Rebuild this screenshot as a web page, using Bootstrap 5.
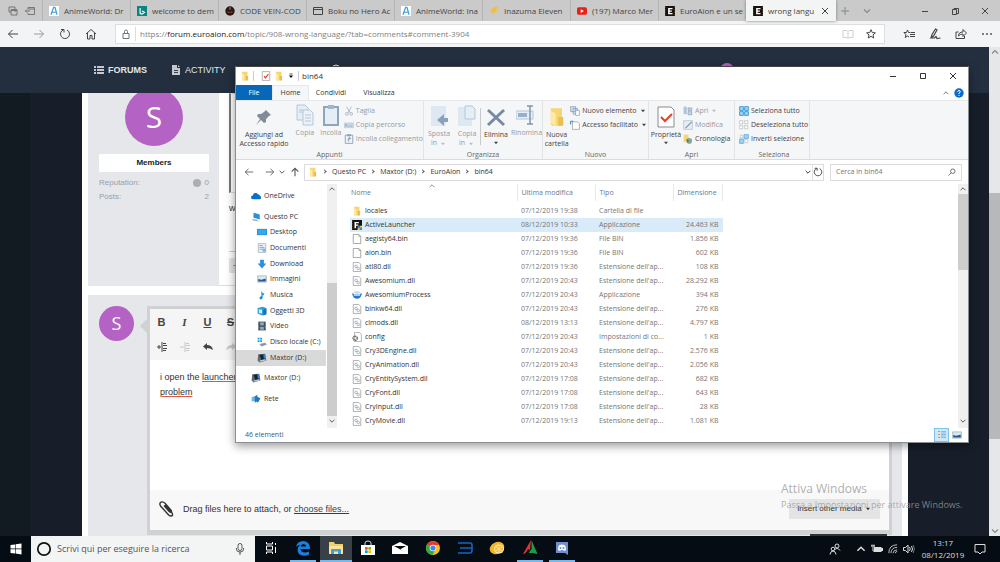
<!DOCTYPE html>
<html lang="it">
<head>
<meta charset="utf-8">
<meta name="viewport" content="width=device-width, initial-scale=1">
<title>wrong language - EuroAion</title>
<link rel="stylesheet" href="https://cdn.jsdelivr.net/npm/bootstrap@5.3.0/dist/css/bootstrap.min.css">
<style>
:root{--ui:"Open Sans","Noto Sans",sans-serif;--forum:"Liberation Sans",Arial,sans-serif}
body{height:100vh;font-family:var(--ui);font-size:8px;line-height:12px;color:#333;background:#171e29;overflow:hidden}
svg{display:block;flex:none}
button,input{font:inherit;color:inherit;background:none;border:0;padding:0;margin:0;line-height:inherit}
button{white-space:nowrap}
input:focus{outline:0}
h1,h2,p,ul,ol{margin:0}
ul,ol{padding:0;list-style:none}
.i8{width:8px;height:8px}.i10{width:10px;height:10px}.i12{width:12px;height:12px}.i16{width:16px;height:16px}
.ln{fill:none;stroke:currentColor}
/* browser */
.tabstrip{height:21px;background:#cacaca;color:#444}
.striptools{width:42px;color:#777}
.btab{width:88px;padding:0 2px 0 6px;gap:5px;border-left:1px solid #b4b4b4}
.btab .ttl{flex:1;overflow:hidden;white-space:nowrap;text-align:left}
.btab.current{background:#f3f4f4;border-color:#f3f4f4;width:90px;padding-right:6px;box-shadow:0 0 3px #777}
.wctl{width:30px;height:21px}
.addr{height:26px;background:#f2f4f5;color:#444}
.addr .tool{width:26px}
.urlbox{height:20px;background:#fff;border:1px solid #dcdedf;margin:0 11px}
.urlbox .lock{width:20px;border-right:1px solid #ddd;height:14px}
.urltext{color:#808080;font-size:8px}
.urltext b{font-weight:400;color:#222}
/* forum */
.site{background:linear-gradient(90deg,#131b22 30px,#171e29 30px);min-height:0}
.sitenav{height:46px;background:#232f3f;font-family:var(--forum);font-size:9px;color:#e4e6e9;padding-left:94px}
.sitenav a{color:inherit;text-decoration:none}
.sitenav .browse{margin-left:104px}
.sitenav .me{width:14px;height:14px;border-radius:50%;background:#b462c4;margin-right:130px}
.sitenav .me+svg{margin-right:117px}
.sitecol{margin:0 81px 0 82px;background:#fff;padding:0 6px;font-family:var(--forum);font-size:9px;line-height:14px;height:100%;overflow:hidden}
.panel-g{background:#e6e7ea}
.topic{height:193px}
.author{width:131px;padding:0 10px 0 11px}
.avatar{background:#b462c4;color:#fff;border-radius:50%;font-family:var(--ui)}
.avatar.big{width:58px;height:58px;margin-top:-5px;font-size:30px;line-height:58px}
.avatar.sm2{width:35px;height:35px;font-size:18px;line-height:35px}
.role{background:#fff;height:18px;line-height:18px;width:100%;margin:8px 0 4px;font-size:8px;color:#222;border-radius:1px}
.stats{color:#9a9ea5;font-size:8px}
.postbody{border-bottom:1px solid #ddd;padding:0 10px}
.quoted{border:1px solid #ddd;border-left:2px solid #777;height:100px}
.postbody hr{margin:36px 0 6px}
.reply{margin-top:9px;padding:11px 10px 0 11px;height:300px}
.editor{border:3px solid #cfd1d2;border-bottom-width:5px;margin-left:13px}
.notch{left:-10px;top:9px;border:8px solid transparent;border-left:0;border-right-color:#cfd1d2}
.edtools{height:51px;background:#f5f5f5;color:#444}
.edtools .rw{height:25px}
.edtools button{width:23px;height:25px;font-size:11px;font-weight:700}
.edtext{height:130px;background:#fff;padding:10px;font-size:9px;line-height:15px;color:#333}
.spell{text-decoration:underline 1px;text-decoration-color:#e05545;text-underline-offset:1px}
.attach{height:40px;background:#f8f8f8;padding:0 9px 2px;font-size:9px}
.attach a{color:#2e3f5c}
.media{background:#e4e4e4;color:#333;width:91px;height:20px;font-size:8px;border-radius:1px}
.more{background:#e4e4e4;width:24px;height:15px;border-radius:1px}
.submit{background:#333;width:77px;height:20px;margin:-1px 5px 0 auto}
.pscroll{width:11px;background:#e6e7e8;color:#888}
.pscroll .thumb{background:#b7b8b9;height:246px;margin-top:136px}
.watermark{right:41px;bottom:50px;color:#9a9a9acc;pointer-events:none;width:178px;white-space:nowrap}
.watermark .l1{font-size:12px;line-height:16px}
.watermark .l2{font-size:9px;line-height:15px}
/* file explorer */
.explorer{left:235px;right:31px;top:66px;background:#fff;border:1px solid #8b8f94;border-top-color:#444;box-shadow:0 3px 9px #0006;font-size:7px;line-height:10px}
.titlebar{height:18px;padding-left:4px;gap:3px}
.titlebar h2{font-size:8px;line-height:12px}
.titlebar .wctl{height:18px}
.rtabs{height:15px}
.rtabs button{width:44px;height:15px}
.rtabs .file{width:36px;background:#0767b8;color:#fff}
.rtabs .on{width:37px;background:#f5f6f7;border:1px solid #e6e7e8;border-bottom:0}
.ribbon{height:60px;background:#f5f6f7;border-top:1px solid #e6e7e8;border-bottom:1px solid #dadbdc}
.rgroup{border-right:1px solid #e2e3e4;padding:3px 0 0;color:#444}
.rgroup .gl{line-height:11px;text-align:center;color:#666}
.rtools{height:45px}
.bigb{line-height:9px;height:45px;text-align:center}
.bigb .pic{width:20px;height:22px;margin:0 auto 2px}
.bigb .i8{margin:0 auto}
.off{color:#959ba3}
.off svg{opacity:.6}
.smallb{display:flex;align-items:center;gap:2px;height:14px}
.g1{width:188px}.g2{width:119px}.g3{width:106px}.g4{width:86px}.g5{width:75px}
.w26{width:26px}.w56{width:56px}.w30{width:30px}.w34{width:34px}
.pathrow{height:24px;padding:0 6px 0 4px;color:#555}
.pathrow .nv{width:17px}
.crumbs{height:17px;border:1px solid #dcdcdc;padding-left:3px;color:#333}
.crumbs a{color:inherit;text-decoration:none}
.crumbs li+li::before{content:"";display:inline-block;width:3px;height:3px;border:solid #555;border-width:1px 1px 0 0;transform:rotate(45deg);margin:0 6px 1px 5px}
.find{width:132px;height:17px;border:1px solid #dcdcdc;margin-left:6px;padding:0 5px}
.find input{width:90px}
.find input::placeholder{color:#777;opacity:1}
.treepane{width:91px;padding-top:4px}
.tree{height:219px;gap:5px;color:#333}
.tree .node{display:flex;align-items:center;gap:3px;width:90px;padding-left:15px;flex:1;white-space:nowrap}
.tree .kids{flex:10;display:flex;flex-direction:column}
.tree .kids .sub{padding-left:21px}
.tree .chosen{background:#d9d9d9}
.vscroll{width:10px;background:#f0f0f0;color:#555;padding:1px 0 3px;gap:1px}
.vscroll .thumb{background:#cdcdcd}
.files{table-layout:fixed;width:373px;border-collapse:collapse;color:#767676;margin-left:13px}
.files th{font-weight:400;color:#5f7b96;height:17px;padding:0 0 0 4px;border-right:1px solid #e8e8e8}
.files th:first-child{padding-left:1px}
.files .sorted{top:-2px;left:78px;color:#888}
.files td{height:14px;padding:0 0 0 4px;line-height:14px;white-space:nowrap}
.files td:first-child{color:#333;padding-left:2px}
.files td:last-child{text-align:right;padding-right:4px}
.files .sp td{height:3px}
.files .sel td{background:#d9eaf8}
.files .fn{display:flex;align-items:center;gap:3px;height:14px}
.status{height:14px;padding:0 4px 0 9px;color:#3c5a78}
.vw{width:15px;height:14px}
.vw.on{background:#cde8fb;border:1px solid #7cc3ee}
/* taskbar */
.taskbar{height:26px;background:#060c13;color:#fff}
.startb{width:31px}
.search{width:224px;background:#f3f4f4;color:#555;padding:0 9px 0 5px}
.search input{font-size:9px;margin-left:5px}
.search input::placeholder{color:#555;opacity:1}
.apps{width:323px}
.apps button{flex:1;height:26px;border-bottom:2px solid transparent}
.apps .run{background:linear-gradient(#76b9ed,#76b9ed) center bottom/26px 2px no-repeat border-box}
.apps .front{background:#3a4047;border-color:#76b9ed}
.tray{color:#ddd}
.tray button{width:16px}
.tray .clock{width:52px;text-align:center;font-size:8px}
.tray .note{width:22px;margin-right:9px}
</style>
</head>
<body class="d-flex flex-column">
<svg width="0" height="0" class="position-absolute" aria-hidden="true">
<symbol id="folder" viewBox="0 0 16 16"><path d="M3 1h9v14H4l-1-1z" fill="#f6d673"/><path d="M3 3l4 2v10l-4-2z" fill="#ffe9a6"/><path d="M9 8h4v7H9z" fill="#eabf51"/></symbol>
<symbol id="page" viewBox="0 0 16 16"><path d="M2 .7h9l3 3v11.6H2z" fill="#fff" stroke="#8b8b8b" stroke-width="1.2"/><path d="M11 1v3h3" fill="none" stroke="#8b8b8b"/></symbol>
<symbol id="dll" viewBox="0 0 16 16"><path d="M2 .7h9l3 3v11.6H2z" fill="#fcfcfc" stroke="#9a9a9a" stroke-width="1.2"/><circle cx="6.500" cy="7" r="2" fill="none" stroke="#a3b1c0" stroke-width="1.500"/><circle cx="10" cy="10.500" r="2" fill="none" stroke="#a3b1c0" stroke-width="1.500"/></symbol>
<symbol id="ini" viewBox="0 0 16 16"><path d="M4 .7h8l3 3v11.6H4z" fill="#fff" stroke="#8b8b8b"/><circle cx="5" cy="10" r="3.300" fill="none" stroke="#666" stroke-width="2.400" stroke-dasharray="2 .8"/></symbol>
<symbol id="eaion" viewBox="0 0 16 16"><path fill="#17120f" d="M0 0h16v16H0z"/><path d="M1 1v14M15 1v14" stroke="#8a5a32" stroke-dasharray="2 2"/><path d="M5 3h7v2H7.500v2H11v2H7.500v2H12v2H5z" fill="#fff"/></symbol>
<symbol id="eshield" viewBox="0 0 16 16"><path fill="#17120f" d="M0 0h16v16H0z"/><path d="M1 1v14" stroke="#8a5a32" stroke-dasharray="2 2"/><path d="M4 3h7v2H6.500v2H10v2H6.500v4H4z" fill="#fff"/><path d="M9 9h3.500v3.500H9zM12.500 12.500H16V16h-3.500z" fill="#2f86dc"/><path d="M12.500 9H16v3.500h-3.500zM9 12.500h3.500V16H9z" fill="#f4cb3c"/></symbol>
<symbol id="awes" viewBox="0 0 16 16"><path d="M0 5q8 3 16 0-2 9-8 9T0 5z" fill="#2878c4"/><path d="M2 4q6-4 12 0l-6 2z" fill="#b9d8ee"/><path d="M3 8h10" stroke="#fff" stroke-width="2"/></symbol>
<symbol id="disk" viewBox="0 0 16 16"><path d="M2 2l11-1 2 11-11 3-3-3z" fill="#5b6772"/><path d="M4 3l8-1 1 7-6 2z" fill="#19222c"/><path d="M10 2h3l1 6-3 1z" fill="#3788cf"/><path d="M4 12l9-2 1 2-9 2z" fill="#c3ccd4"/></symbol>
<symbol id="aw" viewBox="0 0 16 16"><path fill="#fff" d="M0 0h16v16H0z"/><path d="M3 14L7.500 2h2L13 14M5 10h7" fill="none" stroke="#2b9be0" stroke-width="1.800"/></symbol>
<symbol id="cut" viewBox="0 0 16 16"><path d="M4 1l6 10M12 1L6 11" stroke="#7890ab" stroke-width="1.500" fill="none"/><circle cx="4.500" cy="12.500" r="2.200" fill="none" stroke="#7890ab" stroke-width="1.500"/><circle cx="11.500" cy="12.500" r="2.200" fill="none" stroke="#7890ab" stroke-width="1.500"/></symbol>
<symbol id="min" viewBox="0 0 10 10"><path d="M2 5.500h6" class="ln"/></symbol>
<symbol id="cls" viewBox="0 0 10 10"><path d="M2 2l6 6M8 2L2 8" class="ln"/></symbol>
<symbol id="up" viewBox="0 0 10 10"><path d="M2 6.500l3-3 3 3" class="ln" stroke-width="1.200"/></symbol>
<symbol id="dn" viewBox="0 0 10 10"><path d="M2 3.500l3 3 3-3" class="ln" stroke-width="1.200"/></symbol>
<symbol id="car" viewBox="0 0 10 10"><path d="M2.500 3.500h5l-2.500 3z" fill="currentColor"/></symbol>
<symbol id="back" viewBox="0 0 12 12"><path d="M11 6H1.500M5.500 2l-4 4 4 4" class="ln"/></symbol>
<symbol id="fwd" viewBox="0 0 12 12"><path d="M1 6h9.500M6.500 2l4 4-4 4" class="ln"/></symbol>
<symbol id="rel" viewBox="0 0 12 12"><path d="M4.500 1.800A4.500 4.500 0 1 0 8 2M2 1.500h3v3" class="ln"/></symbol>
<symbol id="thumbs" viewBox="0 0 16 16"><path d="M1 3h14v10H1z" fill="#dbe9f5" stroke="#8ba0b4"/><path d="M2 8l5 1 7-2v5H2z" fill="#245b90"/></symbol>
</svg>

<header>
<div class="tabstrip d-flex align-items-center">
 <div class="striptools d-flex align-items-center justify-content-around px-1">
  <button aria-label="Schede salvate"><svg class="i10 ln" viewBox="0 0 10 10"><path d="M1 1h6v5M1 1v5h2M3 3.500h6V9H3zM3 4.500h6"/></svg></button>
  <button aria-label="Metti da parte"><svg class="i10 ln" viewBox="0 0 10 10"><path d="M3 3V1.500h6.500v7H3V7M5 5H0M2 3.500L.5 5 2 6.500M3 3h6"/></svg></button>
 </div>
 <button class="btab d-flex align-items-center h-100"><svg class="i10"><use href="#aw"/></svg><span class="ttl">AnimeWorld: Dr</span></button>
 <button class="btab d-flex align-items-center h-100"><svg class="i10" viewBox="0 0 16 16"><path fill="#0c8484" d="M0 0h16v16H0z"/><path d="M5 3v9l3 1 4-3-4-2" fill="none" stroke="#fff" stroke-width="1.800"/></svg><span class="ttl">welcome to dem</span></button>
 <button class="btab d-flex align-items-center h-100"><svg class="i10" viewBox="0 0 16 16"><circle cx="8" cy="8" r="7.500" fill="#231815"/><path d="M3 9h4v2zM9 9h4l-4 2zM7 2h2v4H7z" fill="#e06030"/></svg><span class="ttl">CODE VEIN-COD</span></button>
 <button class="btab d-flex align-items-center h-100"><svg class="i10 ln" viewBox="0 0 10 10"><path d="M.5 1.500h9v7h-9zM.5 3.500h9"/></svg><span class="ttl">Boku no Hero Ac</span></button>
 <button class="btab d-flex align-items-center h-100"><svg class="i10"><use href="#aw"/></svg><span class="ttl">AnimeWorld: Ina</span></button>
 <button class="btab d-flex align-items-center h-100"><svg class="i10" viewBox="0 0 16 16"><path d="M8 1h7l-4 5h4L2 15l4-6H1z" fill="#f6bd3d"/></svg><span class="ttl">Inazuma Eleven</span></button>
 <button class="btab d-flex align-items-center h-100"><svg class="i10" viewBox="0 0 16 16"><rect y="2" width="16" height="12" rx="3" fill="#e62117"/><path d="M6 5l5 3-5 3z" fill="#fff"/></svg><span class="ttl">(197) Marco Mer</span></button>
 <button class="btab d-flex align-items-center h-100"><svg class="i10"><use href="#eaion"/></svg><span class="ttl">EuroAion e un se</span></button>
 <button class="btab current d-flex align-items-center h-100"><svg class="i10"><use href="#eaion"/></svg><span class="ttl">wrong langu</span><svg class="i10"><use href="#cls"/></svg></button>
 <button class="px-1 text-secondary opacity-75" aria-label="Nuova scheda"><svg class="i10 ln" viewBox="0 0 10 10"><path d="M5 1v8M1 5h8"/></svg></button>
 <button class="ms-2 text-secondary opacity-75" aria-label="Anteprima schede"><svg class="i10"><use href="#dn"/></svg></button>
 <div class="ms-auto d-flex">
  <button class="wctl d-flex align-items-center justify-content-center" aria-label="Riduci"><svg class="i10"><use href="#min"/></svg></button>
  <button class="wctl d-flex align-items-center justify-content-center" aria-label="Ripristina"><svg class="i10 ln" viewBox="0 0 10 10"><path d="M2.500 3.500h4v5h-4zM4 3.500v-1h4.500v5h-2"/></svg></button>
  <button class="wctl d-flex align-items-center justify-content-center" aria-label="Chiudi"><svg class="i10"><use href="#cls"/></svg></button>
 </div>
</div>
<div class="addr d-flex align-items-center">
 <button class="tool d-flex justify-content-center" aria-label="Indietro"><svg class="i12"><use href="#back"/></svg></button>
 <button class="tool d-flex justify-content-center opacity-50" aria-label="Avanti"><svg class="i12"><use href="#fwd"/></svg></button>
 <button class="tool d-flex justify-content-center" aria-label="Aggiorna"><svg class="i12"><use href="#rel"/></svg></button>
 <button class="tool d-flex justify-content-center" aria-label="Home"><svg class="i12 ln" viewBox="0 0 12 12"><path d="M1 6l5-4.500L11 6M2.500 5v6h2.500V7.500h2V11h2.500V5"/></svg></button>
 <div class="urlbox d-flex align-items-center flex-grow-1">
  <span class="lock d-flex align-items-center justify-content-center text-secondary"><svg class="i10 ln" viewBox="0 0 10 10"><path d="M2 4.500h6v5H2zM3.500 4.500V2.500a1.500 1.500 0 0 1 3 0v2"/></svg></span>
  <span class="urltext flex-grow-1 ps-1">https://<b>forum.euroaion.com</b>/topic/908-wrong-language/?tab=comments#comment-3904</span>
  <button class="me-1 opacity-25" aria-label="Visualizzazione di lettura"><svg class="i12 ln" viewBox="0 0 12 12"><path d="M1 2.500h4l1 1 1-1h4v7H7l-1 1-1-1H1zM6 3.500v7"/></svg></button>
  <button class="mx-2" aria-label="Aggiungi ai preferiti"><svg class="i10 ln" viewBox="0 0 12 12"><path stroke-width="1.200" d="M6 .8l1.500 3.500 3.800.3-2.900 2.500.9 3.700L6 8.800l-3.300 2 .9-3.700L.7 4.600l3.800-.3z"/></svg></button>
 </div>
 <button class="tool d-flex justify-content-center" aria-label="Preferiti"><svg class="i12 ln" viewBox="0 0 12 12"><path d="M7 4.500H5.500L4.500 2l-1 2.500H.8l2.200 2-.8 3 2.300-1.500 1.500 1M7.500 4.500H12M7 6.500h5M7 8.500h5"/></svg></button>
 <button class="tool d-flex justify-content-center" aria-label="Note Web"><svg class="i12 ln" viewBox="0 0 12 12"><path stroke-width="1.200" d="M2 10L3 6.500 6.500 1 8 2 4.500 8 2 10h3.500l1.500-1.500 1 2 3.500-.5"/></svg></button>
 <button class="tool d-flex justify-content-center" aria-label="Condividi"><svg class="i12 ln" viewBox="0 0 12 12"><path d="M3.500 4H1v6.500h8.500V8M3.500 8q0-4 4.500-4V1.500L11.500 5 8 8.500V6Q5 6 3.500 8z"/></svg></button>
 <button class="tool d-flex justify-content-center" aria-label="Altro"><svg class="i12" viewBox="0 0 12 12" fill="currentColor"><circle cx="2" cy="6" r=".9"/><circle cx="6" cy="6" r=".9"/><circle cx="10" cy="6" r=".9"/></svg></button>
</div>
</header>

<main class="site flex-grow-1 d-flex overflow-hidden">
 <div class="flex-grow-1 d-flex flex-column overflow-hidden">
  <nav class="sitenav d-flex align-items-center flex-shrink-0">
   <a href="#" class="d-flex align-items-center gap-1 fw-bold"><svg class="i10" viewBox="0 0 10 10" fill="#c3c8cf"><path d="M0 1h2v2H0zM3 1h7v2H3zM0 4h2v2H0zM3 4h7v2H3zM0 7h2v2H0zM3 7h7v2H3z"/></svg>FORUMS</a>
   <a href="#" class="d-flex align-items-center gap-1 ms-4"><svg class="i10" viewBox="0 0 10 10"><path d="M1 0h5v3h3v7H1z" fill="#c3c8cf"/><path d="M3 5h4v1H3zM3 7h4v1H3z" fill="#3c4756"/><path d="M7 0l2 2H7z" fill="#c3c8cf"/></svg>ACTIVITY</a>
   <a href="#" class="browse" aria-label="Browse"><svg class="i12 ln" viewBox="0 0 12 12"><circle cx="6" cy="5" r="4"/></svg></a>
   <span class="me ms-auto"></span><svg class="i8" viewBox="0 0 8 8"><path d="M4 0l4 4H0z" fill="#fff"/></svg>
  </nav>
  <div class="sitecol">
   <article class="topic d-flex">
    <aside class="author panel-g d-flex flex-column align-items-center">
     <div class="avatar big text-center">S</div>
     <div class="role text-center fw-bold">Members</div>
     <div class="stats w-100 d-flex justify-content-between"><span>Reputation:</span><span class="d-flex align-items-center gap-1"><svg class="i8" viewBox="0 0 8 8"><circle cx="4" cy="4" r="4" fill="#adaeb0"/></svg>0</span></div>
     <div class="stats w-100 d-flex justify-content-between"><span>Posts:</span><span>2</span></div>
    </aside>
    <div class="postbody flex-grow-1">
     <div class="quoted"></div>
     <p class="pt-2">wrong language</p>
     <hr><button class="more text-start ps-1">+</button>
    </div>
   </article>
   <section class="reply panel-g d-flex align-items-start">
    <div class="avatar sm2 text-center flex-shrink-0">S</div>
    <div class="flex-grow-1">
    <div class="editor position-relative">
     <span class="notch position-absolute"></span>
     <div class="edtools">
      <div class="rw d-flex"><button>B</button><button class="fst-italic" style="font-family:'Liberation Serif',serif">I</button><button class="text-decoration-underline">U</button><button class="text-decoration-line-through">S</button></div>
      <div class="rw d-flex align-items-center">
       <button aria-label="Aumenta rientro"><svg class="i10 ln mx-auto" viewBox="0 0 10 10"><path d="M0 5h4M2 3v4M5 0v10M6 1.500h3M6 3.500h4M6 6.500h4M6 8.500h3"/></svg></button>
       <button class="opacity-25" aria-label="Riduci rientro"><svg class="i10 ln mx-auto" viewBox="0 0 10 10"><path d="M0 5h4M5 0v10M6 1.500h3M6 3.500h4M6 6.500h4M6 8.500h3"/></svg></button>
       <button aria-label="Annulla"><svg class="i10 mx-auto" viewBox="0 0 10 10"><path d="M0 4.500L4 1v2q5 0 6 5-3-2-6-2v2z" fill="currentColor"/></svg></button>
       <button class="opacity-25" aria-label="Ripeti"><svg class="i10 mx-auto" viewBox="0 0 10 10"><path d="M10 4.500L6 1v2Q1 3 0 8q3-2 6-2v2z" fill="currentColor"/></svg></button>
      </div>
     </div>
     <div class="edtext" contenteditable="true" role="textbox" aria-label="Risposta">i open the <span class="spell">launcher</span><br><span class="spell">problem</span></div>
     <div class="attach d-flex align-items-center">
      <svg class="i16" viewBox="0 0 16 16" fill="none" stroke="#333" stroke-width="1.400"><path d="M6 4l7 8q1.500 2.500-.8 3-1.500.3-3-1.500L1.500 5Q0 2.500 2 1.200q2-1 4 1l6 7q1 1.500 0 2-1 .4-2-.8L5 4.500"/></svg>
      <span class="ms-2">Drag files here to attach, or <a href="#">choose files...</a></span>
      <button class="media ms-auto">Insert other media <svg class="i8 d-inline" viewBox="0 0 10 10"><use href="#car"/></svg></button>
     </div>
    </div>
    <div class="submit position-relative"></div>
    </div>
   </section>
  </div>
 </div>
 <div class="pscroll d-flex flex-column align-items-center"><svg class="i10"><use href="#up"/></svg><div class="thumb w-100"></div><svg class="i10 mt-auto"><use href="#dn"/></svg></div>
</main>

<section class="explorer position-absolute" aria-label="bin64">
 <div class="titlebar d-flex align-items-center">
  <svg class="i10"><use href="#folder"/></svg><span class="vr my-1"></span>
  <svg class="i10 ms-1" viewBox="0 0 16 16"><path d="M2 1h12v14H2z" fill="#fff" stroke="#888"/><path d="M5 8l2 3 5-6" fill="none" stroke="#d8452b" stroke-width="2"/></svg>
  <svg class="i10"><use href="#folder"/></svg><svg class="i8" viewBox="0 0 10 10"><path d="M3 2.500h4" class="ln"/><path d="M2.500 4.500h5l-2.500 3z"/></svg><span class="vr my-1"></span>
  <h2>bin64</h2>
  <div class="ms-auto d-flex">
   <button class="wctl d-flex align-items-center justify-content-center" aria-label="Riduci"><svg class="i10"><use href="#min"/></svg></button>
   <button class="wctl d-flex align-items-center justify-content-center" aria-label="Ingrandisci"><svg class="i10 ln" viewBox="0 0 10 10"><path d="M2.500 2.500h5v5h-5z"/></svg></button>
   <button class="wctl d-flex align-items-center justify-content-center" aria-label="Chiudi"><svg class="i10"><use href="#cls"/></svg></button>
  </div>
 </div>
 <div class="rtabs d-flex align-items-center">
  <button class="file">File</button><button class="on">Home</button><button>Condividi</button><button class="ms-1">Visualizza</button>
  <button class="ms-auto w-auto text-secondary" aria-label="Riduci barra"><svg class="i8"><use href="#up"/></svg></button>
  <button class="w-auto mx-1" aria-label="Guida"><svg class="i10" viewBox="0 0 10 10"><circle cx="5" cy="5" r="4.700" fill="#0a6cce"/><path d="M3.700 3.800q0-1.300 1.300-1.300t1.300 1.200Q6.300 4.500 5 5v1M5 7v1" fill="none" stroke="#fff"/></svg></button>
 </div>
 <div class="ribbon d-flex">
  <div class="rgroup g1"><div class="rtools d-flex">
   <button class="bigb w56"><svg class="pic" viewBox="0 0 20 22"><path d="M12 4l5 5-2 1-3 3v3l-2 1-3-3-5 5 4-6-3-3 1-2h3l3-2z" fill="#828c98"/></svg>Aggiungi ad<br>Accesso rapido</button>
   <button class="bigb w26 off d-flex flex-column"><svg class="pic" viewBox="0 0 20 22"><path d="M2 1h8l3 3v12H2z" fill="#dce8f4" stroke="#8aa8c8"/><path d="M8 6h7l3 3v12H8z" fill="#e8f0f8" stroke="#8aa8c8"/><path d="M4 6h4M4 8h4M10 11h6M10 14h6M10 17h6" stroke="#8aa8c8"/></svg><span class="w-100">Copia</span></button>
   <button class="bigb w26 off d-flex flex-column"><svg class="pic" viewBox="0 0 20 22"><path d="M3 3h14v18H3z" fill="#dce8f4" stroke="#4d7199" stroke-width="2"/><path d="M7 1h6v4H7z" fill="#6d8aa8"/></svg><span class="w-100">Incolla</span></button>
   <div><button class="smallb off"><svg class="i10"><use href="#cut"/></svg>Taglia</button><button class="smallb off"><svg class="i10" viewBox="0 0 16 16"><path d="M0 4h16v9H0z" fill="#a8c0da"/><path d="M2 7l1 3 1-3M6 10h2M10 10h3" stroke="#35587e" fill="none"/></svg>Copia percorso</button><button class="smallb off"><svg class="i10" viewBox="0 0 16 16"><path d="M2 2h12v13H2z" fill="#e8f0f8" stroke="#4d7199" stroke-width="1.500"/><path d="M6 0h4v3H6zM7 12V7h3M8.500 5l2 2-2 2" fill="none" stroke="#35587e" stroke-width="1.500"/></svg>Incolla collegamento</button></div>
  </div><div class="gl">Appunti</div></div>
  <div class="rgroup g2"><div class="rtools d-flex">
   <button class="bigb w30 off"><svg class="pic" viewBox="0 0 20 22"><path d="M2 1h15v20H2z" fill="#cfe0f0"/><path d="M19 13h-4v-4l-7 6 7 6v-4h4z" fill="#456a92"/></svg>Sposta<br>in <svg class="i8 d-inline"><use href="#car"/></svg></button>
   <button class="bigb w26 off"><svg class="pic" viewBox="0 0 20 22"><path d="M1 2h14v19H1z" fill="#cfe0f0"/><path d="M8 1h7l3 3v10H8z" fill="#dce8f4" stroke="#8aa8c8"/></svg>Copia<br>in <svg class="i8 d-inline"><use href="#car"/></svg></button>
   <span class="vr my-1 opacity-10"></span>
   <button class="bigb w30"><svg class="pic" viewBox="0 0 20 22"><path d="M2 4l16 15M18 4L2 19" stroke="#768aa5" stroke-width="3"/></svg>Elimina<svg class="i8"><use href="#car"/></svg></button>
   <button class="bigb w30 off d-flex flex-column"><svg class="pic" viewBox="0 0 20 22"><path d="M0 7h17v8H0z" fill="#dce8f4" stroke="#8aa8c8"/><path d="M2 9h9v4H2z" fill="#5c83ae"/><path d="M11 2h6M14 2v18M11 20h6" stroke="#35587e" stroke-width="1.500"/></svg><span class="w-100">Rinomina</span></button>
  </div><div class="gl">Organizza</div></div>
  <div class="rgroup g3"><div class="rtools d-flex">
   <button class="bigb w30"><svg class="pic" viewBox="0 0 16 16"><use href="#folder"/></svg>Nuova<br>cartella</button>
   <div><button class="smallb"><svg class="i10" viewBox="0 0 16 16"><path d="M1 1h8v8H1zM5 4h7v9H5z" fill="#cfe0f0" stroke="#7890ab"/><path d="M9 7h6v8H9z" fill="#fff" stroke="#7890ab"/></svg>Nuovo elemento<svg class="i8"><use href="#car"/></svg></button><button class="smallb"><svg class="i10" viewBox="0 0 16 16"><path d="M4 3h8l3 3v9H4z" fill="#fff" stroke="#888"/><path d="M1 7V2h4" fill="none" stroke="#2878c4" stroke-width="1.500"/></svg>Accesso facilitato<svg class="i8"><use href="#car"/></svg></button></div>
  </div><div class="gl">Nuovo</div></div>
  <div class="rgroup g4"><div class="rtools d-flex">
   <button class="bigb w34"><svg class="pic" viewBox="0 0 20 22"><path d="M2 1h13l3 3v17H2z" fill="#fff" stroke="#8b8b8b"/><path d="M5 11l4 4 7-7" fill="none" stroke="#e0402a" stroke-width="2"/></svg>Proprietà<svg class="i8"><use href="#car"/></svg></button>
   <div><button class="smallb off"><svg class="i10" viewBox="0 0 16 16"><path d="M1 1h5v12H1z" fill="#7aa5d0"/><path d="M8 3h6v4H8zM8 9h6v5H8z" fill="#a8c0da" stroke="#35587e"/></svg>Apri<svg class="i8"><use href="#car"/></svg></button><button class="smallb off"><svg class="i10" viewBox="0 0 16 16"><path d="M1 1h14v14H1z" fill="#dce8f4" stroke="#6d95bf"/><path d="M4 13L14 3" stroke="#35587e" stroke-width="2"/></svg>Modifica</button><button class="smallb"><svg class="i10" viewBox="0 0 16 16"><path d="M1 1h8v12H1z" fill="#f6d673"/><circle cx="10" cy="11" r="4.500" fill="#8fa39a"/><path d="M5 8l3 6 1-4z" fill="#1d8a35"/></svg>Cronologia</button></div>
  </div><div class="gl">Apri</div></div>
  <div class="rgroup g5 ps-1"><div class="rtools">
   <button class="smallb"><svg class="i10" viewBox="0 0 16 16"><path d="M1 1h6v6H1zM9 1h6v6H9zM1 9h6v6H1zM9 9h6v6H9z" fill="#9fd4f5" stroke="#3a9bdc" stroke-width="1.500"/></svg>Seleziona tutto</button><button class="smallb"><svg class="i10" viewBox="0 0 16 16"><path d="M1 1h5v5H1zM9 1h5v5H9zM1 9h5v5H1zM9 9h5v5H9z" fill="#fff" stroke="#b0b4b8"/></svg>Deseleziona tutto</button><button class="smallb"><svg class="i10" viewBox="0 0 16 16"><path d="M2 2h4v4H2zM9 9h5v5H9z" fill="#fff" stroke="#b0b4b8"/><path d="M8 1h7v6H8zM1 8h6v7H1z" fill="#9fd4f5" stroke="#3a9bdc"/></svg>Inverti selezione</button>
  </div><div class="gl">Seleziona</div></div>
 </div>
 <div class="pathrow d-flex align-items-center">
  <button class="nv d-flex justify-content-center" aria-label="Indietro"><svg class="i10" viewBox="0 0 12 12"><use href="#back"/></svg></button><button class="nv d-flex justify-content-center ms-1" aria-label="Avanti"><svg class="i10" viewBox="0 0 12 12"><use href="#fwd"/></svg></button><button aria-label="Recenti"><svg class="i8"><use href="#dn"/></svg></button><button class="mx-1" aria-label="Su"><svg class="i10 ln" viewBox="0 0 12 12"><path stroke-width="1.300" d="M6 11V1.500M2 5.500l4-4 4 4"/></svg></button>
  <div class="crumbs flex-grow-1 d-flex align-items-center"><svg class="i10"><use href="#folder"/></svg>
   <ol class="d-flex flex-grow-1 align-items-center"><li></li><li><a href="#">Questo PC</a></li><li><a href="#">Maxtor (D:)</a></li><li><a href="#">EuroAion</a></li><li><a href="#">bin64</a></li></ol>
   <button aria-label="Cronologia percorsi"><svg class="i8"><use href="#dn"/></svg></button><button class="h-100 border-start" aria-label="Aggiorna"><svg class="i10" viewBox="0 0 12 12"><use href="#rel"/></svg></button></div>
  <div class="find d-flex align-items-center justify-content-between"><input type="search" placeholder="Cerca in bin64" aria-label="Cerca in bin64"><svg class="i8 ln" viewBox="0 0 10 10"><circle cx="6" cy="4" r="2.800"/><path d="M4 6L.5 9.500"/></svg></div>
 </div>
 <div class="d-flex">
  <nav class="treepane">
   <ul class="tree d-flex flex-column">
    <li class="node"><svg class="i10" viewBox="0 0 16 16"><path d="M3 13a3 3 0 0 1 0-6 4.500 4.500 0 0 1 8-2q3 0 3.500 3a2.600 2.600 0 0 1-.5 5z" fill="#0a6fc9"/></svg>OneDrive</li>
    <li class="kids">
     <div class="node"><svg class="i10" viewBox="0 0 16 16"><path d="M4 1l10 3v8L4 9z" fill="#2a8fdd"/><path d="M1 11l8 1 4 3-9-1z" fill="#9fb0bf"/></svg>Questo PC</div>
     <div class="node sub"><svg class="i10" viewBox="0 0 16 16"><path d="M0 3h16v10H0z" fill="#1e88dc"/><path d="M1 4h14v8H1z" fill="#3aa7f0"/></svg>Desktop</div>
     <div class="node sub"><svg class="i10" viewBox="0 0 16 16"><path d="M2 1h12v14H2z" fill="#edf2f7" stroke="#8ba0b4"/><path d="M4 4h5M4 7h8M4 10h8" stroke="#5b7da0"/><path d="M9 9h5v5H9z" fill="#7ab8e8"/></svg>Documenti</div>
     <div class="node sub"><svg class="i10" viewBox="0 0 16 16"><path d="M5 1h6v6h4l-7 8-7-8h4z" fill="#2a8fdd"/></svg>Download</div>
     <div class="node sub"><svg class="i10"><use href="#thumbs"/></svg>Immagini</div>
     <div class="node sub"><svg class="i10" viewBox="0 0 16 16"><path d="M7 1q1 4 5 5-1 1-1 3-1-2-2-2v5q0 3-3 3-2-1-2-2 0-3 3-3z" fill="#1e88dc"/></svg>Musica</div>
     <div class="node sub"><svg class="i10" viewBox="0 0 16 16"><path d="M1 3l8-2 6 2v10l-7 2-7-3z" fill="#2aa0dd"/><path d="M3 5l5 1v6l-5-1z" fill="#cdeefb"/><path d="M10 6l5-2v9l-5 2z" fill="#1673b8"/></svg>Oggetti 3D</div>
     <div class="node sub"><svg class="i10" viewBox="0 0 16 16"><path d="M2 1h12v14H2z" fill="#39434e"/><path d="M5 2h6v5H5zM5 9h6v5H5z" fill="#8da7c0"/><path d="M3 2v12M13 2v12" stroke="#ddd" stroke-dasharray="1 1"/></svg>Video</div>
     <div class="node sub"><svg class="i10" viewBox="0 0 16 16"><path d="M1 1h3v3H1zM5 1h3v3H5zM1 5h3v3H1zM5 5h3v3H5z" fill="#1e9be8"/><path d="M4 11l9-2 3 3-9 3z" fill="#8b97a3"/></svg>Disco locale (C:)</div>
     <div class="node sub chosen"><svg class="i10"><use href="#disk"/></svg>Maxtor (D:)</div>
    </li>
    <li class="node"><svg class="i10"><use href="#disk"/></svg>Maxtor (D:)</li>
    <li class="node"><svg class="i10" viewBox="0 0 16 16"><path d="M1 5l6-2v8l-6 1z" fill="#6fb6e8"/><path d="M6 4l4-3v3l5 3-4 7-2-2-3 2z" fill="#2277bd"/></svg>Rete</li>
   </ul>
  </nav>
  <div class="vscroll d-flex flex-column align-items-center"><svg class="i8"><use href="#up"/></svg><div class="thumb w-100 mt-auto" style="height:133px"></div><svg class="i8"><use href="#dn"/></svg></div>
  <div class="flex-grow-1">
   <table class="files">
    <colgroup><col style="width:167px"><col style="width:78px"><col style="width:78px"><col></colgroup>
    <thead><tr><th class="position-relative">Nome<svg class="sorted i8 position-absolute"><use href="#up"/></svg></th><th>Ultima modifica</th><th>Tipo</th><th>Dimensione</th></tr></thead>
    <tbody>
    <tr class="sp"><td colspan="4"></td></tr>
    <tr><td><span class="fn"><svg class="i10"><use href="#folder"/></svg>locales</span></td><td>07/12/2019 19:38</td><td>Cartella di file</td><td></td></tr>
    <tr class="sel"><td><span class="fn"><svg class="i10"><use href="#eshield"/></svg>ActiveLauncher</span></td><td>08/12/2019 10:33</td><td>Applicazione</td><td>24.463 KB</td></tr>
    <tr><td><span class="fn"><svg class="i10"><use href="#page"/></svg>aegisty64.bin</span></td><td>07/12/2019 19:36</td><td>File BIN</td><td>1.856 KB</td></tr>
    <tr><td><span class="fn"><svg class="i10"><use href="#page"/></svg>aion.bin</span></td><td>07/12/2019 19:36</td><td>File BIN</td><td>602 KB</td></tr>
    <tr><td><span class="fn"><svg class="i10"><use href="#dll"/></svg>atl80.dll</span></td><td>07/12/2019 19:36</td><td>Estensione dell'ap...</td><td>108 KB</td></tr>
    <tr><td><span class="fn"><svg class="i10"><use href="#dll"/></svg>Awesomium.dll</span></td><td>07/12/2019 20:43</td><td>Estensione dell'ap...</td><td>28.292 KB</td></tr>
    <tr><td><span class="fn"><svg class="i10"><use href="#awes"/></svg>AwesomiumProcess</span></td><td>07/12/2019 20:43</td><td>Applicazione</td><td>394 KB</td></tr>
    <tr><td><span class="fn"><svg class="i10"><use href="#dll"/></svg>binkw64.dll</span></td><td>07/12/2019 20:43</td><td>Estensione dell'ap...</td><td>276 KB</td></tr>
    <tr><td><span class="fn"><svg class="i10"><use href="#dll"/></svg>clmods.dll</span></td><td>08/12/2019 13:13</td><td>Estensione dell'ap...</td><td>4.797 KB</td></tr>
    <tr><td><span class="fn"><svg class="i10"><use href="#ini"/></svg>config</span></td><td>07/12/2019 20:43</td><td>Impostazioni di co...</td><td>1 KB</td></tr>
    <tr><td><span class="fn"><svg class="i10"><use href="#dll"/></svg>Cry3DEngine.dll</span></td><td>07/12/2019 20:43</td><td>Estensione dell'ap...</td><td>2.576 KB</td></tr>
    <tr><td><span class="fn"><svg class="i10"><use href="#dll"/></svg>CryAnimation.dll</span></td><td>07/12/2019 20:43</td><td>Estensione dell'ap...</td><td>2.056 KB</td></tr>
    <tr><td><span class="fn"><svg class="i10"><use href="#dll"/></svg>CryEntitySystem.dll</span></td><td>07/12/2019 17:08</td><td>Estensione dell'ap...</td><td>682 KB</td></tr>
    <tr><td><span class="fn"><svg class="i10"><use href="#dll"/></svg>CryFont.dll</span></td><td>07/12/2019 17:08</td><td>Estensione dell'ap...</td><td>643 KB</td></tr>
    <tr><td><span class="fn"><svg class="i10"><use href="#dll"/></svg>CryInput.dll</span></td><td>07/12/2019 17:08</td><td>Estensione dell'ap...</td><td>28 KB</td></tr>
    <tr><td><span class="fn"><svg class="i10"><use href="#dll"/></svg>CryMovie.dll</span></td><td>07/12/2019 19:13</td><td>Estensione dell'ap...</td><td>1.081 KB</td></tr>
    </tbody>
   </table>
  </div>
  <div class="vscroll d-flex flex-column align-items-center"><svg class="i8"><use href="#up"/></svg><div class="thumb w-100" style="height:76px"></div><svg class="i8 mt-auto"><use href="#dn"/></svg></div>
 </div>
 <div class="status d-flex align-items-center"><span class="me-auto">46 elementi</span>
  <button class="vw on d-flex align-items-center justify-content-center" aria-label="Dettagli"><svg class="i10" viewBox="0 0 10 10"><path d="M1 1.500h2M1 4.500h2M1 7.500h2" stroke="#c99a4a"/><path d="M4 1.500h5M4 4.500h5M4 7.500h5M4 3h5M4 6h5" stroke="#6f98b8" stroke-width=".6"/></svg></button>
  <button class="vw d-flex align-items-center justify-content-center" aria-label="Anteprime"><svg class="i10"><use href="#thumbs"/></svg></button>
 </div>
</section>

<div class="watermark position-absolute"><div class="l1">Attiva Windows</div><div class="l2">Passa a Impostazioni per attivare Windows.</div></div>

<footer class="taskbar d-flex flex-shrink-0">
 <button class="startb d-flex align-items-center justify-content-center" aria-label="Start"><svg class="i12" viewBox="0 0 12 12" fill="#fff"><path d="M.5 2L5 1.400v4.200H.5zM5.600 1.300L11.500.5v5.100H5.600zM.5 6.200H5v4.300L.5 9.900zM5.600 6.200h5.900v5.200l-5.900-.8z"/></svg></button>
 <div class="search d-flex align-items-center"><svg class="i16" viewBox="0 0 16 16"><circle cx="8" cy="8" r="6.200" fill="none" stroke="#111" stroke-width="1.700"/></svg><input class="flex-grow-1" type="text" placeholder="Scrivi qui per eseguire la ricerca" aria-label="Cerca"><svg class="i12 ln" viewBox="0 0 12 12"><rect x="4" y=".5" width="4" height="7" rx="2"/><path d="M2.500 5v1.500Q2.500 9 6 9t3.500-2.500V5M6 9v3"/></svg></div>
 <div class="apps d-flex">
  <button aria-label="Visualizzazione attività"><svg class="i12 ln mx-auto" viewBox="0 0 12 12"><path d="M1.500 0v2h6V0M1.500 4h6v4h-6zM1.500 12v-2h6v2M10.500 1v2M10.500 5v6"/></svg></button>
  <button class="run" aria-label="Edge"><svg class="i16 mx-auto" viewBox="0 0 16 16"><path d="M1 7Q2 1 8.500 1 15 1.500 15 9H5.500q.5 3.500 4.500 3.500 2 0 4-1V14.500q-2 1.200-5 1.200-6.500-.5-6.500-6 0-3 3-5Q2.500 5 1 7zM5.700 6.500h5.500Q11 4 8.500 4T5.700 6.500z" fill="#1b7fe0"/></svg></button>
  <button class="front" aria-label="Esplora file"><svg class="i16 mx-auto" viewBox="0 0 16 16"><path d="M1 2h5l1 2h8v10H1z" fill="#f3cf6a"/><path d="M1 6h14v8H1z" fill="#ffe394"/><path d="M3 14V9h10v5h-3v-2.500H6V14z" fill="#3fa1df"/></svg></button>
  <button aria-label="Store"><svg class="i16 mx-auto" viewBox="0 0 16 16"><path d="M1 5h14v10H1z" fill="#fff"/><path d="M5 5V3q0-2 3-2t3 2v2" fill="none" stroke="#ddd"/><path d="M5 7h2.700v2.700H5z" fill="#f25022"/><path d="M8.300 7H11v2.700H8.300z" fill="#7fba00"/><path d="M5 10.300h2.700V13H5z" fill="#00a4ef"/><path d="M8.300 10.300H11V13H8.300z" fill="#ffb900"/></svg></button>
  <button aria-label="Posta"><svg class="i16 mx-auto" viewBox="0 0 16 16"><path d="M0 6l8-4 8 4v8H0z" fill="#fff"/><path d="M2 6h12L8 9.500l5 2.500" fill="#060c13"/></svg></button>
  <button aria-label="Chrome"><svg class="i16 mx-auto" viewBox="0 0 16 16"><circle cx="8" cy="8" r="7" fill="#fbbf12"/><path d="M8 8L2 4.500A7 7 0 0 1 14.200 5H8z" fill="#e33b2e"/><path d="M2 4.500A7 7 0 0 0 7.500 15L10.500 9 8 8z" fill="#2da94f"/><circle cx="8" cy="8" r="3.300" fill="#fff"/><circle cx="8" cy="8" r="2.600" fill="#4285f4"/></svg></button>
  <button aria-label="Giochi"><svg class="i16 mx-auto" viewBox="0 0 16 16" fill="none" stroke="#1565c0" stroke-width="1.600"><path d="M1 3h12q2 0 2 2v5q0 3-2 3H1M3 8h12"/></svg></button>
  <button aria-label="Limone"><svg class="i16 mx-auto" viewBox="0 0 16 16"><ellipse cx="8" cy="8" rx="7.500" ry="5.800" transform="rotate(-25 8 8)" fill="#f3b32b"/><ellipse cx="10" cy="9" rx="5" ry="4.500" fill="#fff0b0"/><ellipse cx="10" cy="9" rx="4" ry="3.500" fill="#f6b93a"/><path d="M10 5v8M7 7l6 4M7 11l6-4" stroke="#fff0b0" stroke-width=".7"/></svg></button>
  <button class="run" aria-label="Aion"><svg class="i16 mx-auto" viewBox="0 0 16 16"><path d="M9 0L1 14q3 0 5-5l2 1z" fill="#e3342b"/><path d="M9.500 0v9l-3 4h4l5 1z" fill="#1d9b45"/></svg></button>
  <button class="run" aria-label="Discord"><svg class="i16 mx-auto" viewBox="0 0 16 16"><path d="M2 2h12v13l-3-2H2z" fill="#6f8fd0"/><path d="M4 10q0-4 1.500-5 2.500-.8 5 0Q12 6 12 10l-2 1-1-1H7l-1 1z" fill="#fff"/><circle cx="6.500" cy="8" r="1" fill="#6f8fd0"/><circle cx="9.500" cy="8" r="1" fill="#6f8fd0"/></svg></button>
 </div>
 <div class="tray d-flex align-items-center ms-auto">
  <button class="me-2" aria-label="Contatti"><svg class="i12 ln" viewBox="0 0 12 12"><circle cx="8" cy="3" r="2"/><path d="M5.500 7q2.500-3.500 5.500.5M1 11.500Q1.500 8 4 8t3 3.500"/><circle cx="4" cy="6" r="1.800"/></svg></button>
  <button aria-label="Icone nascoste"><svg class="i12 mx-auto" viewBox="0 0 10 10"><use href="#up"/></svg></button>
  <button aria-label="Batteria"><svg class="i12 mx-auto" viewBox="0 0 12 12"><path d="M3 4h7.500v1H12v3h-1.500v1H3z" fill="#ddd"/><path d="M0 3h4M1 1.500v2M3 1.500v2M2 4v4h2" class="ln"/></svg></button>
  <button aria-label="Rete"><svg class="i10 ln mx-auto" viewBox="0 0 12 12"><path d="M1 11Q1 1 11 1M3.500 11Q4 4 11 4M6 11Q6.500 7 11 7M8.500 11q.5-2 2.500-2"/></svg></button>
  <button aria-label="Volume"><svg class="i12 ln mx-auto" viewBox="0 0 12 12"><path d="M.5 4.500h2L5 2v8L2.500 7.500h-2zM6.500 4q1.500 2 0 4M8.500 3q2 3 0 6"/><path opacity=".5" d="M10.200 2q2.400 4 0 8"/></svg></button>
  <div class="clock">13:17<br>08/12/2019</div>
  <button class="note" aria-label="Notifiche"><svg class="i12 ln mx-auto" viewBox="0 0 12 12"><path d="M1 1.500h10v7.500H8L6 11 4 9H1z"/></svg></button>
 </div>
</footer>
<script src="https://cdn.jsdelivr.net/npm/bootstrap@5.3.0/dist/js/bootstrap.bundle.min.js"></script>
</body>
</html>
